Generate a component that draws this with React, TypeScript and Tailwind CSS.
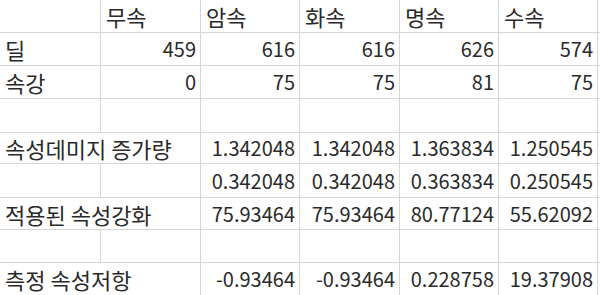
const cols = ["w-[101px]", "w-[100px]", "w-[99px]", "w-[100px]", "w-[99px]", "w-[99px]"];

type Row = { h: string; label?: string; span?: boolean; values: string[]; header?: boolean };

const rows: Row[] = [
  { h: "h-[33px]", values: ["무속", "암속", "화속", "명속", "수속"], header: true },
  { h: "h-[33px]", label: "딜", values: ["459", "616", "616", "626", "574"] },
  { h: "h-[33px]", label: "속강", values: ["0", "75", "75", "81", "75"] },
  { h: "h-[34px]", values: ["", "", "", "", ""] },
  { h: "h-[31px]", label: "속성데미지 증가량", span: true, values: ["1.342048", "1.342048", "1.363834", "1.250545"] },
  { h: "h-[34px]", values: ["", "0.342048", "0.342048", "0.363834", "0.250545"] },
  { h: "h-[32px]", label: "적용된 속성강화", span: true, values: ["75.93464", "75.93464", "80.77124", "55.62092"] },
  { h: "h-[33px]", values: ["", "", "", "", ""] },
  { h: "h-[33px]", label: "측정 속성저항", span: true, values: ["-0.93464", "-0.93464", "0.228758", "19.37908"] },
];

function Cell({ w, children, right }: { w: string; children?: React.ReactNode; right?: boolean }) {
  return (
    <div
      className={`${w} box-border flex shrink-0 items-center overflow-visible whitespace-nowrap border-r border-[#d6d6d6] ${
        right ? "justify-end pr-[4px] text-[20px]" : "justify-start pl-[5px]"
      }`}
    >
      {children}
    </div>
  );
}

export default function App() {
  return (
    <div
      className="h-[295px] w-[600px] overflow-hidden bg-white text-[22px] leading-none text-[#2a2a2a]"
      style={{ fontFamily: '"Noto Sans CJK KR", sans-serif' }}
    >
      {rows.map((r, i) => (
        <div key={i} className={`${r.h} box-border flex border-b border-[#d6d6d6]`}>
          {r.span ? (
            <Cell w="w-[201px]">{r.label}</Cell>
          ) : (
            <Cell w={cols[0]}>{r.label}</Cell>
          )}
          {(r.span ? r.values.map((v, j) => ({ v, w: cols[j + 2] })) : r.values.map((v, j) => ({ v, w: cols[j + 1] }))).map(
            (c, j) => (
              <Cell key={j} w={c.w} right={!r.header}>
                {c.v}
              </Cell>
            ),
          )}
          <div className="flex-1" />
        </div>
      ))}
    </div>
  );
}
